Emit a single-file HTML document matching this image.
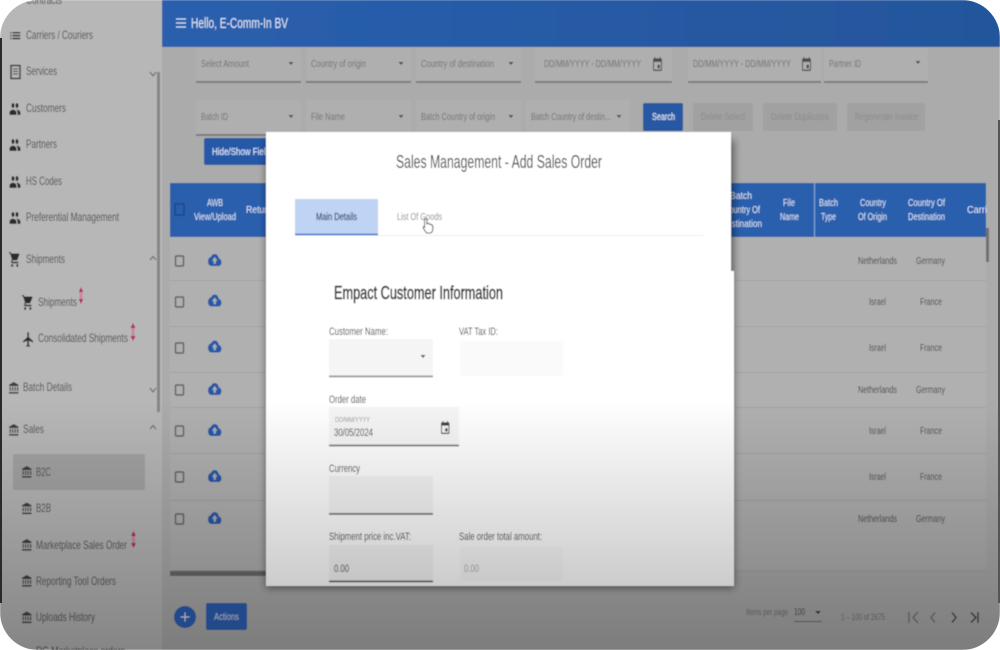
<!DOCTYPE html>
<html lang="en">
<head>
<meta charset="utf-8">
<title>Sales Management - Add Sales Order</title>
<style>
html,body{margin:0;padding:0;width:1000px;height:650px;overflow:hidden;background:#fff}
svg{display:block}
text{font-family:"Liberation Sans",sans-serif;font-size:11.5px;fill:#555}
.s text{fill:#4c4c4c;font-size:12px}
.w text{fill:#dfe8f5;font-size:10.5px}
.r text{fill:#454545;font-size:10.5px}
.f text{fill:#727272;font-size:10.5px}
.d text{fill:#8b8b8b;font-size:10px}
.l text{fill:#484848;font-size:11px}
</style>
</head>
<body>
<svg width="1000" height="650" viewBox="0 0 1000 650" xmlns="http://www.w3.org/2000/svg">
<defs>
<filter id="b" x="-2%" y="-2%" width="104%" height="104%"><feGaussianBlur stdDeviation="0.5"/></filter>
<filter id="sh" x="-10%" y="-10%" width="120%" height="120%"><feGaussianBlur stdDeviation="4"/></filter>
<linearGradient id="fade" x1="0" y1="400" x2="0" y2="650" gradientUnits="userSpaceOnUse"><stop offset="0" stop-color="#000" stop-opacity="0"/><stop offset="1" stop-color="#000" stop-opacity=".27"/></linearGradient>
<linearGradient id="hd" x1="0" x2="1" y1="0" y2="0"><stop offset="0" stop-color="#2a5fae"/><stop offset="1" stop-color="#24569c"/></linearGradient>
<path id="ppl" d="M16 11c1.66 0 2.99-1.34 2.99-3S17.66 5 16 5c-1.66 0-3 1.34-3 3s1.34 3 3 3zm-8 0c1.66 0 2.99-1.34 2.99-3S9.66 5 8 5C6.34 5 5 6.34 5 8s1.34 3 3 3zm0 2c-2.33 0-7 1.17-7 3.5V19h14v-2.5c0-2.33-4.67-3.5-7-3.5zm8 0c-.29 0-.62.02-.97.05 1.16.84 1.97 1.97 1.97 3.45V19h6v-2.5c0-2.33-4.67-3.5-7-3.5z"/>
<path id="cart" d="M7 18c-1.1 0-1.99.9-1.99 2S5.9 22 7 22s2-.9 2-2-.9-2-2-2zM1 2v2h2l3.6 7.59-1.35 2.45c-.16.28-.25.61-.25.96 0 1.1.9 2 2 2h12v-2H7.42c-.14 0-.25-.11-.25-.25l.03-.12.9-1.63h7.45c.75 0 1.41-.41 1.75-1.03l3.58-6.49c.08-.14.12-.31.12-.48 0-.55-.45-1-1-1H5.21l-.94-2H1zm16 16c-1.1 0-1.99.9-1.99 2s.89 2 1.99 2 2-.9 2-2-.9-2-2-2z"/>
<path id="bank" d="M3 10v7h2.500v-7H3zm5 0v7h2.500v-7H8zm5 0v7h2.500v-7H13zm5 0v7h2.500v-7H18zM2 22h19v-3H2v3zM11.500 1L2 6v2.500h19V6l-9.500-5z"/>
<path id="cloud" d="M19.35 10.04C18.67 6.59 15.64 4 12 4 9.11 4 6.6 5.64 5.35 8.04 2.34 8.36 0 10.91 0 14c0 3.31 2.69 6 6 6h13c2.76 0 5-2.24 5-5 0-2.64-2.05-4.78-4.65-4.96zM14 13v4h-4v-4H7l5-5 5 5h-3z"/>
<path id="cal" d="M17 12h-5v5h5v-5zM16 1v2H8V1H6v2H5c-1.11 0-1.99.9-1.99 2L3 19c0 1.1.89 2 2 2h14c1.1 0 2-.9 2-2V5c0-1.1-.9-2-2-2h-1V1h-2zm3 18H5V8h14v11z"/>
</defs>

<g filter="url(#b)">
<!-- base -->
<rect width="1000" height="650" fill="#ababab"/>
<rect width="162" height="650" fill="#b7b7b7"/>
<rect x="162" width="838" height="47" fill="url(#hd)"/>
<rect x="157" y="72" width="3" height="340" fill="#858585"/>

<!-- header -->
<path d="M176 19h10M176 23h10M176 27h10" stroke="#d4e0f2" stroke-width="1.200"/>
<text x="191" y="28" textLength="97" lengthAdjust="spacingAndGlyphs" style="font-size:15px;fill:#dfe8f6">Hello, E-Comm-In BV</text>

<!-- sidebar -->
<g class="s">
<text x="26" y="4" textLength="36" lengthAdjust="spacingAndGlyphs">Contracts</text>
<text x="26" y="39" textLength="67" lengthAdjust="spacingAndGlyphs">Carriers / Couriers</text>
<text x="26" y="75" textLength="31" lengthAdjust="spacingAndGlyphs">Services</text>
<text x="26" y="112" textLength="40" lengthAdjust="spacingAndGlyphs">Customers</text>
<text x="26" y="148" textLength="31" lengthAdjust="spacingAndGlyphs">Partners</text>
<text x="26" y="185" textLength="36" lengthAdjust="spacingAndGlyphs">HS Codes</text>
<text x="26" y="221" textLength="93" lengthAdjust="spacingAndGlyphs">Preferential Management</text>
<text x="26" y="263" textLength="39" lengthAdjust="spacingAndGlyphs">Shipments</text>
<text x="38" y="306" textLength="39" lengthAdjust="spacingAndGlyphs">Shipments</text>
<text x="38" y="342" textLength="90" lengthAdjust="spacingAndGlyphs">Consolidated Shipments</text>
<text x="23" y="391" textLength="49" lengthAdjust="spacingAndGlyphs">Batch Details</text>
<text x="23" y="433" textLength="21" lengthAdjust="spacingAndGlyphs">Sales</text>
<rect x="13" y="454" width="132" height="36" rx="2" fill="#a3a3a3"/>
<text x="36" y="476" textLength="15" lengthAdjust="spacingAndGlyphs">B2C</text>
<text x="36" y="512" textLength="15" lengthAdjust="spacingAndGlyphs">B2B</text>
<text x="36" y="549" textLength="91" lengthAdjust="spacingAndGlyphs">Marketplace Sales Order</text>
<text x="36" y="585" textLength="80" lengthAdjust="spacingAndGlyphs">Reporting Tool Orders</text>
<text x="36" y="621" textLength="59" lengthAdjust="spacingAndGlyphs">Uploads History</text>
<text x="36" y="655" textLength="89" lengthAdjust="spacingAndGlyphs">DG Marketplace orders</text>
</g>

<!-- sidebar icons -->
<g fill="#2b2b2b">
<path transform="translate(8.500,27) scale(.56,.72)" d="M3 13h2v-2H3v2zm0 4h2v-2H3v2zm0-8h2V7H3v2zm4 4h14v-2H7v2zm0 4h14v-2H7v2zM7 7v2h14V7H7z"/>
<rect x="11" y="65.500" width="9" height="13" fill="none" stroke="#333" stroke-width="1.400"/>
<path d="M13 69h5M13 71.500h5M13 74h5" stroke="#333" stroke-width="1"/>
<use href="#ppl" transform="translate(9,98.700) scale(.5,.85)"/>
<use href="#ppl" transform="translate(9,134.700) scale(.5,.85)"/>
<use href="#ppl" transform="translate(9,171.700) scale(.5,.85)"/>
<use href="#ppl" transform="translate(9,207.700) scale(.5,.85)"/>
<use href="#cart" transform="translate(8.500,250.500) scale(.52,.75)"/>
<use href="#cart" transform="translate(21.500,293.500) scale(.52,.75)"/>
<path transform="translate(22,330.500) scale(.53,.75)" d="M21 16v-2l-8-5V3.500c0-.83-.67-1.500-1.500-1.500S10 2.670 10 3.500V9l-8 5v2l8-2.500V19l-2 1.500V22l3.500-1 3.500 1v-1.500L13 19v-5.500l8 2.500z"/>
</g>
<g fill="#3e3e3e">
<use href="#bank" transform="translate(8,381.500) scale(.5,.55)"/>
<use href="#bank" transform="translate(8,423.500) scale(.5,.55)"/>
<use href="#bank" transform="translate(21,465.500) scale(.5,.55)"/>
<use href="#bank" transform="translate(21,502) scale(.5,.55)"/>
<use href="#bank" transform="translate(21,538.500) scale(.5,.55)"/>
<use href="#bank" transform="translate(21,574.500) scale(.5,.55)"/>
<use href="#bank" transform="translate(21,611) scale(.5,.55)"/>
</g>
<!-- chevrons -->
<g fill="none" stroke="#666" stroke-width="1.100">
<path d="M150 72l3 4 3-4"/>
<path d="M150 260l3-3.500 3 3.500"/>
<path d="M150 388l3 4 3-4"/>
<path d="M150 429l3-3.500 3 3.500"/>
</g>
<!-- red badges -->
<g fill="#b32a52">
<path d="M81 287l2.200 5h-4.400zM81 304l2.200-5h-4.400z"/><rect x="79.500" y="292" width="3" height="7" fill="#c78aa0"/>
<path d="M133 323l2.500 5h-5zM133 341l2.500-5h-5z"/><rect x="131.500" y="328" width="3" height="8" fill="#c78aa0"/>
<path d="M133.500 531l2.500 5h-5zM133.500 548l2.500-5h-5z"/><rect x="132" y="536" width="3" height="7" fill="#c78aa0"/>
</g>

<!-- filter row -->
<g fill="#afafaf">
<rect x="196" y="48" width="105" height="34"/><rect x="306" y="48" width="105" height="34"/><rect x="416" y="48" width="105" height="34"/>
<rect x="535" y="48" width="137" height="34"/><rect x="688" y="48" width="133" height="34"/><rect x="824" y="48" width="104" height="34"/>
<rect x="196" y="100" width="105" height="35"/><rect x="306" y="100" width="105" height="35"/><rect x="416" y="100" width="105" height="35"/><rect x="526" y="100" width="104" height="35"/>
</g>
<g fill="#7d7d7d">
<rect x="196" y="81" width="105" height="2"/><rect x="306" y="81" width="105" height="2"/><rect x="416" y="81" width="105" height="2"/>
<rect x="535" y="81" width="137" height="2"/><rect x="688" y="81" width="133" height="2"/><rect x="824" y="81" width="104" height="2"/>
<rect x="196" y="134" width="105" height="2"/><rect x="306" y="134" width="105" height="2"/><rect x="416" y="134" width="105" height="2"/><rect x="526" y="134" width="104" height="2"/>
</g>
<g class="f">
<text x="201" y="67" textLength="48" lengthAdjust="spacingAndGlyphs">Select Amount</text>
<text x="311" y="67" textLength="55" lengthAdjust="spacingAndGlyphs">Country of origin</text>
<text x="421" y="67" textLength="73" lengthAdjust="spacingAndGlyphs">Country of destination</text>
<text x="544" y="67" textLength="97" lengthAdjust="spacingAndGlyphs">DD/MM/YYYY - DD/MM/YYYY</text>
<text x="693" y="67" textLength="98" lengthAdjust="spacingAndGlyphs">DD/MM/YYYY - DD/MM/YYYY</text>
<text x="829" y="67" textLength="32" lengthAdjust="spacingAndGlyphs">Partner ID</text>
<text x="201" y="120" textLength="27" lengthAdjust="spacingAndGlyphs">Batch ID</text>
<text x="311" y="120" textLength="34" lengthAdjust="spacingAndGlyphs">File Name</text>
<text x="421" y="120" textLength="74" lengthAdjust="spacingAndGlyphs">Batch Country of origin</text>
<text x="531" y="120" textLength="80" lengthAdjust="spacingAndGlyphs">Batch Country of destin...</text>
</g>
<g fill="#4e4e4e">
<path d="M288.500 62h5l-2.500 3zM398.500 62h5l-2.500 3zM508.500 62h5l-2.500 3zM915.500 61h5l-2.500 3zM288.500 115h5l-2.500 3zM398.500 115h5l-2.500 3zM508.500 115h5l-2.500 3zM616.500 115h5l-2.500 3z"/>
<use href="#cal" transform="translate(651.500,56.300) scale(.5,.7)"/>
<use href="#cal" transform="translate(800.500,56.300) scale(.5,.7)"/>
</g>

<!-- buttons -->
<rect x="643" y="103" width="40" height="28" rx="2" fill="#2558a3"/>
<text x="652" y="120" textLength="23" lengthAdjust="spacingAndGlyphs" style="font-size:10.500px;fill:#dbe5f3;stroke:#dbe5f3;stroke-width:.15px">Search</text>
<g fill="#a1a1a1"><rect x="693" y="103" width="60" height="28" rx="2"/><rect x="763" y="103" width="74" height="28" rx="2"/><rect x="847" y="103" width="78" height="28" rx="2"/></g>
<g class="d">
<text x="701" y="120" textLength="44" lengthAdjust="spacingAndGlyphs">Delete Select</text>
<text x="771" y="120" textLength="58" lengthAdjust="spacingAndGlyphs">Delete Duplicates</text>
<text x="855" y="120" textLength="63" lengthAdjust="spacingAndGlyphs">Regenerate Invoice</text>
</g>
<rect x="204" y="138" width="90" height="27" rx="2" fill="#2558a8"/>
<text x="212" y="155" textLength="62" lengthAdjust="spacingAndGlyphs" style="font-size:10.500px;fill:#dbe5f3;stroke:#dbe5f3;stroke-width:.15px">Hide/Show Fields</text>

<!-- table -->
<rect x="170" y="237" width="816" height="334" fill="#b0b0b0"/>
<rect x="170" y="183" width="816" height="54" fill="#2a5fae"/>
<rect x="814" y="183" width="1" height="54" fill="#8aa8d6"/>
<rect x="175" y="204" width="9" height="11" rx="1" fill="none" stroke="#1c3f78" stroke-width="1.300"/>
<g class="w">
<text x="207" y="206" textLength="16" lengthAdjust="spacingAndGlyphs">AWB</text>
<text x="194" y="220" textLength="42" lengthAdjust="spacingAndGlyphs">View/Upload</text>
<text x="246" y="213" textLength="26" lengthAdjust="spacingAndGlyphs">Return</text>
<text x="730" y="199" textLength="22" lengthAdjust="spacingAndGlyphs">Batch</text>
<text x="724" y="213" textLength="36" lengthAdjust="spacingAndGlyphs">Country Of</text>
<text x="721" y="227" textLength="41" lengthAdjust="spacingAndGlyphs">Destination</text>
<text x="783" y="206" textLength="12" lengthAdjust="spacingAndGlyphs">File</text>
<text x="780" y="220" textLength="19" lengthAdjust="spacingAndGlyphs">Name</text>
<text x="819" y="206" textLength="19" lengthAdjust="spacingAndGlyphs">Batch</text>
<text x="821" y="220" textLength="15" lengthAdjust="spacingAndGlyphs">Type</text>
<text x="860" y="206" textLength="26" lengthAdjust="spacingAndGlyphs">Country</text>
<text x="858" y="220" textLength="29" lengthAdjust="spacingAndGlyphs">Of Origin</text>
<text x="908" y="206" textLength="37" lengthAdjust="spacingAndGlyphs">Country Of</text>
<text x="908" y="220" textLength="37" lengthAdjust="spacingAndGlyphs">Destination</text>
<text x="967" y="213" textLength="20" lengthAdjust="spacingAndGlyphs">Carri</text>
</g>
<rect x="986" y="228" width="3" height="34" fill="#6f6f6f"/>
<g fill="#a2a2a2">
<rect x="170" y="280" width="816" height="1"/><rect x="170" y="326" width="816" height="1"/><rect x="170" y="372" width="816" height="1"/><rect x="170" y="407" width="816" height="1"/><rect x="170" y="453" width="816" height="1"/><rect x="170" y="500" width="816" height="1"/><rect x="170" y="570" width="816" height="1"/>
</g>
<rect x="170" y="571" width="100" height="5" fill="#6a6a6a"/>
<g fill="none" stroke="#5f5f5f" stroke-width="1.400">
<rect x="175.500" y="256" width="8" height="10" rx="1"/>
<rect x="175.500" y="297" width="8" height="10" rx="1"/>
<rect x="175.500" y="343" width="8" height="10" rx="1"/>
<rect x="175.500" y="385" width="8" height="10" rx="1"/>
<rect x="175.500" y="426" width="8" height="10" rx="1"/>
<rect x="175.500" y="472" width="8" height="10" rx="1"/>
<rect x="175.500" y="514" width="8" height="10" rx="1"/>
</g>
<g fill="#2558a8">
<use href="#cloud" transform="translate(208,251) scale(.56,.75)"/>
<use href="#cloud" transform="translate(208,291.500) scale(.56,.75)"/>
<use href="#cloud" transform="translate(208,337.500) scale(.56,.75)"/>
<use href="#cloud" transform="translate(208,380) scale(.56,.75)"/>
<use href="#cloud" transform="translate(208,421) scale(.56,.75)"/>
<use href="#cloud" transform="translate(208,467) scale(.56,.75)"/>
<use href="#cloud" transform="translate(208,509) scale(.56,.75)"/>
</g>
<g class="r">
<text x="858" y="264" textLength="39" lengthAdjust="spacingAndGlyphs">Netherlands</text><text x="916" y="264" textLength="29" lengthAdjust="spacingAndGlyphs">Germany</text>
<text x="869" y="305" textLength="17" lengthAdjust="spacingAndGlyphs">Israel</text><text x="920" y="305" textLength="22" lengthAdjust="spacingAndGlyphs">France</text>
<text x="869" y="351" textLength="17" lengthAdjust="spacingAndGlyphs">Israel</text><text x="920" y="351" textLength="22" lengthAdjust="spacingAndGlyphs">France</text>
<text x="858" y="393" textLength="39" lengthAdjust="spacingAndGlyphs">Netherlands</text><text x="916" y="393" textLength="29" lengthAdjust="spacingAndGlyphs">Germany</text>
<text x="869" y="434" textLength="17" lengthAdjust="spacingAndGlyphs">Israel</text><text x="920" y="434" textLength="22" lengthAdjust="spacingAndGlyphs">France</text>
<text x="869" y="480" textLength="17" lengthAdjust="spacingAndGlyphs">Israel</text><text x="920" y="480" textLength="22" lengthAdjust="spacingAndGlyphs">France</text>
<text x="858" y="522" textLength="39" lengthAdjust="spacingAndGlyphs">Netherlands</text><text x="916" y="522" textLength="29" lengthAdjust="spacingAndGlyphs">Germany</text>
</g>

<!-- bottom controls -->
<circle cx="185" cy="617" r="11" fill="#2a5fb4"/>
<path d="M185 612.500v9M180.500 617h9" stroke="#d5e0f0" stroke-width="1.200"/>
<rect x="206" y="603" width="41" height="27" rx="2" fill="#2a5fb4"/>
<text x="214" y="620" textLength="25" lengthAdjust="spacingAndGlyphs" style="font-size:10.500px;fill:#c9d7ee">Actions</text>
<text x="746" y="615" textLength="42" lengthAdjust="spacingAndGlyphs" style="font-size:9.500px;fill:#6f6f6f">Items per page</text>
<text x="794" y="615" textLength="11" lengthAdjust="spacingAndGlyphs" style="font-size:10px;fill:#444">100</text>
<path d="M815 611h6l-3 3z" fill="#333"/>
<rect x="794" y="621" width="28" height="1" fill="#666"/>
<text x="841" y="620" textLength="44" lengthAdjust="spacingAndGlyphs" style="font-size:9.500px;fill:#6f6f6f">1 – 100 of 2675</text>
<g fill="none" stroke-width="1.300">
<path d="M909 612v11M918 612l-5 5.500 5 5.500" stroke="#6a6a6a"/>
<path d="M935 612.500l-4 5 4 5" stroke="#6a6a6a"/>
<path d="M952 612.500l4 5-4 5" stroke="#2e2e2e"/>
<path d="M971 612.500l5 5-5 5M978 612v11" stroke="#2e2e2e"/>
</g>

<!-- modal -->
<rect x="266" y="140" width="468" height="448" fill="#000" opacity=".45" filter="url(#sh)"/>
<path d="M266 132H731V271H734V586H266Z" fill="#fff"/>
<text x="396" y="168" textLength="206" lengthAdjust="spacingAndGlyphs" style="font-size:18px;fill:#444">Sales Management - Add Sales Order</text>
<rect x="295" y="199" width="83" height="36" fill="#bfd3f4"/>
<rect x="295" y="233.500" width="83" height="2" fill="#6486cf"/>
<rect x="378" y="235" width="325" height="1" fill="#eeeeee"/>
<text x="316" y="220" textLength="41" lengthAdjust="spacingAndGlyphs" style="font-size:10.500px;fill:#2f3f5c;stroke:#2f3f5c;stroke-width:.15px">Main Details</text>
<text x="397" y="220" textLength="45" lengthAdjust="spacingAndGlyphs" style="font-size:10.500px;fill:#8a8a8a">List Of Goods</text>
<path d="M424.500 227v-7c0-1.600 2.400-1.600 2.400 0v4.500l.3-1c1.500-.5 2.300.1 2.300.8 1-.5 2-.1 2 .8.800-.2 1.300.2 1.300 1v3.200c0 1.800-1.300 3.700-2.500 3.700h-3c-1 0-1.500-.8-2-1.600l-2-3.400c-.6-1.100.9-1.900 1.600-1z" fill="#fff" stroke="#555" stroke-width="1"/>
<text x="334" y="299" textLength="169" lengthAdjust="spacingAndGlyphs" style="font-size:18px;fill:#2e2e2e;stroke:#2e2e2e;stroke-width:.5px">Empact Customer Information</text>

<g class="l">
<text x="329" y="335" textLength="59" lengthAdjust="spacingAndGlyphs">Customer Name:</text>
<text x="459" y="335" textLength="39" lengthAdjust="spacingAndGlyphs">VAT Tax ID:</text>
<text x="329" y="403" textLength="37" lengthAdjust="spacingAndGlyphs">Order date</text>
<text x="329" y="472" textLength="31" lengthAdjust="spacingAndGlyphs">Currency</text>
<text x="329" y="540" textLength="82" lengthAdjust="spacingAndGlyphs">Shipment price inc.VAT:</text>
<text x="459" y="540" textLength="83" lengthAdjust="spacingAndGlyphs">Sale order total amount:</text>
</g>
<rect x="329" y="339" width="104" height="37" fill="#f5f5f5"/>
<rect x="329" y="375.500" width="104" height="1.800" fill="#9a9a9a"/>
<path d="M420.500 355h5l-2.500 3z" fill="#555"/>
<rect x="460" y="341" width="103" height="35" fill="#fafafa"/>
<rect x="329" y="407" width="130" height="39" fill="#f5f5f5"/>
<rect x="329" y="444.500" width="130" height="2" fill="#8a8a8a"/>
<text x="335" y="422" textLength="35" lengthAdjust="spacingAndGlyphs" style="font-size:7.500px;fill:#9a9a9a">DD/MM/YYYY</text>
<text x="334" y="436" textLength="39" lengthAdjust="spacingAndGlyphs" style="font-size:11px;fill:#444">30/05/2024</text>
<use href="#cal" transform="translate(439.600,420.400) scale(.47,.65)" fill="#444"/>
<rect x="329" y="476" width="104" height="38" fill="#f5f5f5"/>
<rect x="329" y="513" width="104" height="1.800" fill="#777"/>
<rect x="329" y="545" width="104" height="36" fill="#f5f5f5"/>
<rect x="329" y="580.500" width="104" height="1.800" fill="#666"/>
<text x="334" y="572" textLength="15" lengthAdjust="spacingAndGlyphs" style="font-size:11px;fill:#444">0.00</text>
<rect x="460" y="547" width="103" height="34" fill="#fafafa"/>
<text x="464" y="572" textLength="15" lengthAdjust="spacingAndGlyphs" style="font-size:11px;fill:#aaa">0.00</text>

<!-- vignette -->
<rect width="1000" height="650" fill="url(#fade)"/>
</g>

<!-- rounded frame -->
<path d="M1 38V603" fill="none" stroke="#2a2a2a" stroke-width="2"/>
<path d="M999 120V603" fill="none" stroke="#555" stroke-width="2"/>
<path fill-rule="evenodd" fill="#fff" d="M-2 -2H1002V652H-2ZM38 0A38 38 0 0 0 0 38V612A38 38 0 0 0 38 650H962A38 38 0 0 0 1000 612V38A38 38 0 0 0 962 0Z"/>
</svg>
</body>
</html>
